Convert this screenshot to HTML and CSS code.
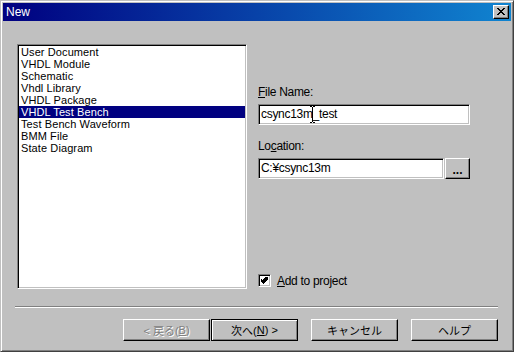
FILE: index.html
```html
<!DOCTYPE html>
<html lang="ja">
<head>
    <meta charset="UTF-8">
    <title>New</title>
    <link rel="stylesheet" href="styles.css">
</head>
<body>
    <div class="window">
        <div class="titlebar">
            <span class="title">New</span>
            <div class="close-btn">
                <svg width="8" height="7" viewBox="0 0 8 7">
                    <path d="M0 0h2v1h1v1h2v-1h1v-1h2v1h-1v1h-1v1h-1v1h1v1h1v1h1v1h-2v-1h-1v-1h-2v1h-1v1h-2v-1h1v-1h1v-1h1v-1h-1v-1h-1v-1h-1z" fill="#000"/>
                </svg>
            </div>
        </div>

        <div class="dialog">
            <div class="main">
                <div class="listbox">
                    <div class="list-item">User Document</div>
                    <div class="list-item">VHDL Module</div>
                    <div class="list-item">Schematic</div>
                    <div class="list-item">Vhdl Library</div>
                    <div class="list-item">VHDL Package</div>
                    <div class="list-item selected">VHDL Test Bench</div>
                    <div class="list-item">Test Bench Waveform</div>
                    <div class="list-item">BMM File</div>
                    <div class="list-item">State Diagram</div>
                </div>

                <div class="form">
                    <div class="label"><u>F</u>ile Name:</div>
                    <div class="field name-field">
                        csync13m_test
                        <svg class="ibeam" width="5" height="17" viewBox="0 0 5 17">
                            <path d="M0 0h2v1h1v-1h2v1h-2v15h2v1h-2v-1h-1v1h-2v-1h2v-15h-2z" fill="#000"/>
                        </svg>
                    </div>

                    <div class="label location-label">Lo<u>c</u>ation:</div>
                    <div class="location-row">
                        <div class="field loc-field">C:¥csync13m</div>
                        <div class="btn browse-btn">...</div>
                    </div>

                    <div class="check-row">
                        <div class="checkbox">
                            <svg width="7" height="7" viewBox="0 0 7 7">
                                <path d="M6 0h1v3h-1v1h-1v1h-1v1h-1v1h-1v-1h-1v-1h-1v-1h-1v-3h1v1h1v1h1v-1h1v-1h1v-1h1z" fill="#000"/>
                            </svg>
                        </div>
                        <span class="check-label"><u>A</u>dd to project</span>
                    </div>
                </div>
            </div>

            <div class="separator"></div>

            <div class="buttons">
                <div class="btn push disabled">&lt; 戻る(<u>B</u>)</div>
                <div class="btn push default">次へ(<u>N</u>) &gt;</div>
                <div class="btn push gap">キャンセル</div>
                <div class="btn push gap">ヘルプ</div>
            </div>
        </div>
    </div>
</body>
</html>
```

FILE: styles.css
```css
body {
    margin: 0;
    background: #c0c0c0;
    font-family: "Liberation Sans", "Noto Sans CJK JP", sans-serif;
    font-size: 12px;
}
.window {
    width: 514px;
    height: 352px;
    box-sizing: border-box;
    background: #c0c0c0;
    border: 1px solid;
    border-color: #c0c0c0 #404040 #404040 #c0c0c0;
    box-shadow: inset 1px 1px #fff, inset -1px -1px #808080;
    padding: 2px;
    display: flex;
    flex-direction: column;
}
.titlebar {
    height: 18px;
    display: flex;
    align-items: center;
    padding: 0 2px 0 3px;
    background: linear-gradient(to right, #000080, #1084d0);
    color: #fff;
}
.close-btn {
    margin-left: auto;
    width: 16px;
    height: 14px;
    box-sizing: border-box;
    background: #c0c0c0;
    border: 1px solid;
    border-color: #fff #000 #000 #fff;
    box-shadow: inset -1px -1px #808080;
    display: flex;
    align-items: center;
    justify-content: center;
    padding: 0 1px 1px 0;
}
.close-btn svg {
    display: block;
}

.dialog {
    flex: 1;
    padding: 23px 13px 0 14px;
    display: flex;
    flex-direction: column;
}
.main {
    display: flex;
    height: 245px;
}
.listbox {
    width: 230px;
    height: 245px;
    box-sizing: border-box;
    background: #fff;
    border: 1px solid;
    border-color: #808080 #fff #fff #808080;
    box-shadow: inset 1px 1px #000, inset -1px -1px #c0c0c0;
    padding: 1px;
    font-size: 11px;
    letter-spacing: 0.1px;
}
.list-item {
    height: 12px;
    line-height: 12px;
    padding-left: 2px;
    white-space: nowrap;
}
.list-item.selected {
    background: #000080;
    color: #fff;
}

.form {
    margin-left: 11px;
    width: 213px;
    box-sizing: border-box;
    padding: 41px 0 2px;
    display: flex;
    flex-direction: column;
}
.label {
    line-height: 14px;
    height: 14px;
    margin-bottom: 5px;
    letter-spacing: -0.3px;
}
.location-label {
    margin-top: 14px;
}
.field {
    position: relative;
    height: 21px;
    box-sizing: border-box;
    background: #fff;
    border: 1px solid;
    border-color: #808080 #fff #fff #808080;
    box-shadow: inset 1px 1px #000, inset -1px -1px #c0c0c0;
    padding: 0 2px;
    line-height: 19px;
    letter-spacing: -0.3px;
    white-space: nowrap;
}
.name-field {
    width: 212px;
}
.ibeam {
    position: absolute;
    left: 51px;
    top: 1px;
}
.location-row {
    display: flex;
}
.loc-field {
    width: 186px;
}
.btn {
    box-sizing: border-box;
    background: #c0c0c0;
    border: 1px solid;
    border-color: #fff #000 #000 #fff;
    box-shadow: inset -1px -1px #808080;
    display: flex;
    align-items: center;
    justify-content: center;
}
.browse-btn {
    width: 25px;
    height: 21px;
    margin-left: 1px;
    font-weight: bold;
    align-items: flex-end;
    padding-bottom: 3px;
    line-height: 10px;
}
.check-row {
    margin-top: auto;
    display: flex;
    align-items: center;
    height: 13px;
}
.checkbox {
    width: 13px;
    height: 13px;
    box-sizing: border-box;
    background: #fff;
    border: 1px solid;
    border-color: #808080 #fff #fff #808080;
    box-shadow: inset 1px 1px #000, inset -1px -1px #c0c0c0;
    display: flex;
    align-items: center;
    justify-content: center;
}
.checkbox svg {
    display: block;
}
.check-label {
    margin-left: 6px;
    letter-spacing: -0.3px;
}

.separator {
    margin: 17px 0 0 -2px;
    width: 483px;
    border-top: 1px solid #808080;
    border-bottom: 1px solid #fff;
}
.buttons {
    margin-top: 11px;
    display: flex;
    justify-content: flex-end;
}
.push {
    width: 87px;
    height: 22px;
    margin-left: 1px;
    font-size: 11px;
    white-space: pre;
}
.push.gap {
    margin-left: 13px;
}
.push.disabled {
    color: #808080;
    text-shadow: 1px 1px #fff;
}
.push.default {
    border-color: #000;
    box-shadow: inset 1px 1px #fff, inset -1px -1px #808080;
}
```
